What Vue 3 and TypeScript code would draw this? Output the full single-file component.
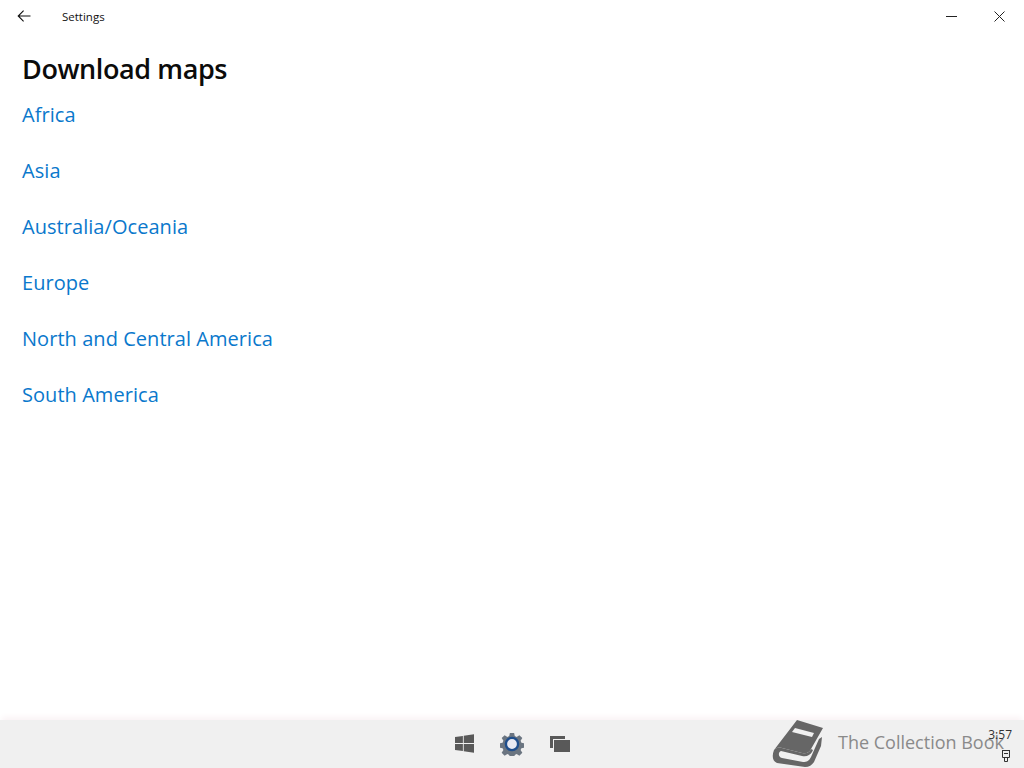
<template>
  <div class="screen">
    <header class="titlebar">
      <button class="back" aria-label="Back">
        <svg width="14" height="14" viewBox="0 0 14 14"><path d="M13.5 7H1.2M6.6 1.6 1.2 7l5.4 5.4" fill="none" stroke="#111" stroke-width="1.1" /></svg>
      </button>
      <span class="app-title">Settings</span>
      <span class="win-btn">
        <svg width="11" height="11" viewBox="0 0 11 11"><path d="M0 5.500h11" stroke="#222" stroke-width="1" /></svg>
      </span>
      <span class="win-btn">
        <svg width="11" height="11" viewBox="0 0 11 11"><path d="M.5.5l10 10M10.5.5l-10 10" stroke="#222" stroke-width="1" /></svg>
      </span>
    </header>

    <main class="content">
      <h1>Download maps</h1>
      <ul class="regions">
        <li v-for="region in regions" :key="region"><a href="#">{{ region }}</a></li>
      </ul>
    </main>

    <footer class="taskbar">
      <div class="task-icons">
        <svg width="19" height="19" viewBox="0 0 20 20"><path d="M0 3.100 8.300 2v7.500H0zM9.200 1.800 20 .2v9.300H9.200zM0 10.500h8.300V18L0 16.900zM9.200 10.500H20v9.300L9.200 18.200z" fill="#595959" /></svg>
        <svg width="24" height="24" viewBox="0 0 26 26">
          <path d="M10.700 1h4.600l.7 3.400 2 .9 3-1.900 3.200 3.200-1.900 3 .9 2 3.400.7v4.600l-3.400.7-.9 2 1.900 3-3.200 3.200-3-1.900-2 .9-.7 3.400h-4.600l-.7-3.400-2-.9-3 1.900-3.200-3.200 1.900-3-.9-2-3.400-.7v-4.600l3.400-.7.900-2-1.900-3 3.200-3.200 3 1.900 2-.9z" fill="#6b7581" />
          <circle cx="13" cy="13" r="6.600" fill="#e8e9f2" stroke="#1f4e8c" stroke-width="2.600" />
        </svg>
        <svg width="20" height="16" viewBox="0 0 20 16"><path d="M0 0h15v3H3v9H0z" fill="#595959" /><path d="M4 4h16v12H4z" fill="#595959" /></svg>
      </div>
      <div class="brand">
        <svg width="52" height="48" viewBox="0 0 52 48">
          <path d="M25 0 51 8 39 29C37 33 34 34 30 33L10 28C6 27 4 28 2 30Z" fill="#666" />
          <path d="M2 30C0 35 0 41 5 43L33 47C37 47 40 45 42 42L49 26 50 17 47 19 39 37C37 41 35 42 31 42L10 38C6 37 6 32 9 31L30 36C35 37 38 35 40 32L41 30 39 29C37 33 34 34 30 33L10 28C6 27 4 28 2 30Z" fill="#666" />
          <path d="M23 8 42 13 40 17 20 12Z" fill="#f0f0f0" />
        </svg>
        <span class="brand-name">The Collection Book</span>
      </div>
      <div class="tray">
        <span class="clock">3:57</span>
        <svg width="8" height="12" viewBox="0 0 8 12"><path d="M.500 0v7.500h7V0M0 .500h8M2 3.500h4M2.500 7.500v4h3v-4" fill="none" stroke="#333" stroke-width="1" /></svg>
      </div>
    </footer>
  </div>
</template>

<script setup lang="ts">
const regions: string[] = [
  'Africa',
  'Asia',
  'Australia/Oceania',
  'Europe',
  'North and Central America',
  'South America'
]
</script>

<style scoped>
.screen {
  position: relative;
  display: flex;
  flex-direction: column;
  width: 1024px;
  height: 768px;
  overflow: hidden;
  background: #fff;
  font-family: "Open Sans", "Noto Sans", sans-serif;
}
.titlebar {
  display: flex;
  align-items: center;
  height: 32px;
  padding-right: 1px;
  flex: none;
}
.back {
  display: flex;
  align-items: center;
  justify-content: center;
  width: 48px;
  height: 32px;
  padding: 0;
  border: 0;
  background: none;
}
.app-title {
  margin-left: 14px;
  margin-right: auto;
  font-size: 11.5px;
  color: #111;
}
.win-btn {
  display: flex;
  align-items: center;
  justify-content: center;
  width: 48px;
  height: 32px;
}
.content {
  flex: 1;
  padding: 19px 22px 0;
}
h1 {
  margin: 0 0 14px;
  font-size: 27px;
  line-height: 36px;
  font-weight: 600;
  letter-spacing: -0.4px;
  color: #0b0b0b;
}
.regions {
  margin: 0;
  padding: 0;
  list-style: none;
}
.regions li {
  height: 56px;
  line-height: 28px;
}
.regions a {
  font-size: 20px;
  letter-spacing: 0.05px;
  color: #0a78cc;
  text-decoration: none;
}
.taskbar {
  position: relative;
  display: flex;
  align-items: center;
  justify-content: center;
  height: 48px;
  flex: none;
  background: #f0f0f0;
  box-shadow: 0 -5px 6px -2px #faf3f5;
}
.task-icons {
  display: flex;
  align-items: center;
  gap: 26px;
  padding-left: 1px;
  margin-top: -1px;
}
.brand {
  position: absolute;
  left: 772px;
  top: 0;
  display: flex;
  align-items: center;
  gap: 14px;
  height: 47px;
}
.brand-name {
  font-size: 18px;
  margin-top: -3px;
  color: #8a8a8a;
  white-space: nowrap;
}
.tray {
  position: absolute;
  right: 12px;
  top: 8px;
  display: flex;
  flex-direction: column;
  align-items: flex-end;
  gap: 8px;
  color: #333;
}
.tray svg {
  margin-right: 2px;
}
.clock {
  font-size: 12px;
  line-height: 14px;
}
</style>
